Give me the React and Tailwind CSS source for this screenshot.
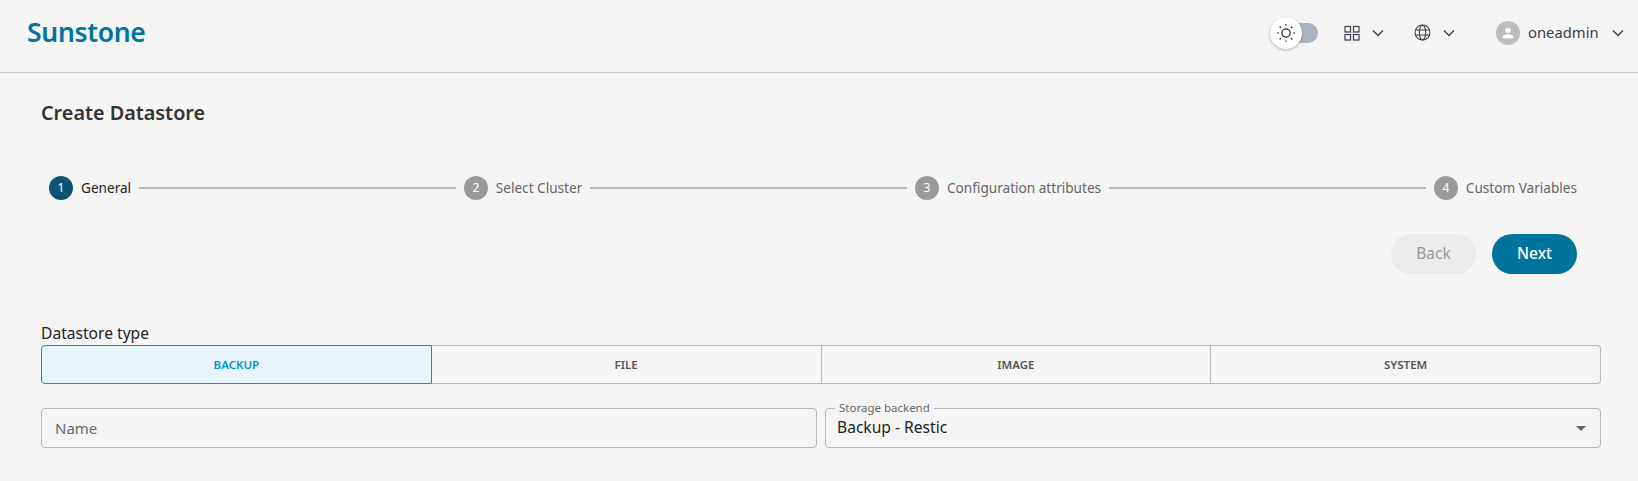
import React from 'react';

const Chevron = () => (
  <svg width="12" height="8" viewBox="0 0 12 8" fill="none" stroke="#3d3d4a" strokeWidth="1.3" className="shrink-0"><path d="M1 1.5l5 5 5-5" /></svg>
);

function Step({ n, label, active }) {
  return (
    <div className="flex items-center gap-2 shrink-0">
      <span className={`w-6 h-6 rounded-full flex items-center justify-center text-xs text-white ${active ? 'bg-[#0b5472]' : 'bg-[#9a9a9a]'}`}>{n}</span>
      <span className={`text-[13.6px] ${active ? 'text-[#222]' : 'text-[#666]'}`}>{label}</span>
    </div>
  );
}

export default function App() {
  return (
    <div className="w-[1638px] h-[481px] bg-[#f5f5f5] overflow-hidden [font-family:'Noto_Sans',sans-serif]">
      <header className="h-[73px] border-b border-[#c8c8c8] flex items-center pl-[27px] pr-[14px]">
        <span className="text-[26.5px] font-semibold text-[#00739e] -mt-[7px] tracking-[-0.3px]">Sunstone</span>
        <div className="ml-auto flex items-center text-[#3d3d4a] -mt-[7px]">
          <div className="relative w-[48px] h-[20px] rounded-full bg-[#aab4c0] mr-[26px]">
            <span className="absolute left-0 -top-[6px] w-[32px] h-[32px] rounded-full bg-white flex items-center justify-center shadow-[0_1px_3px_rgba(0,0,0,0.3)]">
              <svg width="18" height="18" viewBox="0 0 24 24" fill="none" stroke="#222" strokeWidth="1.7" strokeLinecap="round">
                <circle cx="12" cy="12" r="5.5" />
                <path d="M22.5 12h.5M12 1.5V1M12 23v-.5M20 20l-.8-.8M20 4l-.8.8M4 20l.8-.8M4 4l.8.8M1 12h.5" />
              </svg>
            </span>
          </div>
          <svg width="16" height="16" viewBox="0 0 16 16" fill="none" stroke="#3d3d4a" strokeWidth="1.2">
            <rect x="1" y="1.5" width="5.5" height="5.5" /><rect x="9.5" y="1.5" width="5.5" height="5.5" /><rect x="1" y="9.5" width="5.5" height="5.5" /><rect x="9.5" y="9.5" width="5.5" height="5.5" />
          </svg>
          <span className="ml-[12px]"><Chevron /></span>
          <svg className="ml-[30px]" width="17" height="17" viewBox="0 0 24 24" fill="none" stroke="#3d3d4a" strokeWidth="1.5">
            <circle cx="12" cy="12" r="10.5" />
            <ellipse cx="12" cy="12" rx="4.5" ry="10.5" />
            <path d="M2 8.5h20M2 15.5h20" />
          </svg>
          <span className="ml-[12px]"><Chevron /></span>
          <span className="ml-[41px] w-[24px] h-[24px] rounded-full bg-[#bdbdbd] flex items-center justify-center">
            <svg width="16" height="16" viewBox="0 0 24 24" fill="#fff"><path d="M12 12c2.21 0 4-1.79 4-4s-1.79-4-4-4-4 1.79-4 4 1.79 4 4 4zm0 2c-2.67 0-8 1.34-8 4v2h16v-2c0-2.66-5.33-4-8-4z" /></svg>
          </span>
          <span className="ml-[8px] w-[74px] text-[14.8px] text-[#3d3d4a]">oneadmin</span>
          <span className="ml-[10px]"><Chevron /></span>
        </div>
      </header>
      <main className="pl-[41px] pr-[37px]">
        <h1 className="mt-[26px] text-[19.8px] leading-[28px] font-semibold text-[#333]">Create Datastore</h1>
        <div className="mt-[49px] flex items-center gap-2 pl-[8px] pr-[24px] h-6">
          <Step n="1" label="General" active />
          <div className="flex-1 h-[2px] bg-[#b8b8b8]" />
          <Step n="2" label="Select Cluster" />
          <div className="flex-1 h-[2px] bg-[#b8b8b8]" />
          <Step n="3" label="Configuration attributes" />
          <div className="flex-1 h-[2px] bg-[#b8b8b8]" />
          <Step n="4" label="Custom Variables" />
        </div>
        <div className="mt-[34px] flex justify-end gap-4 pr-[24px]">
          <button className="w-[85px] h-[40px] rounded-full bg-[#ebebeb] text-[#999] text-[15.5px]">Back</button>
          <button className="w-[85px] h-[40px] rounded-full bg-[#00739e] text-white text-[15.5px] font-medium">Next</button>
        </div>
        <div className="mt-[49px] h-[22px] leading-[20px] text-[15.6px] text-[#222]">Datastore type</div>
        <div className="flex h-[39px] text-[11.5px] font-semibold text-[#555]">
          <div className="flex-1 flex items-center justify-center border border-[#0098c3] bg-[#e6f4f9] text-[#0098c3] rounded-l-[4px]">BACKUP</div>
          <div className="flex-1 flex items-center justify-center border-y border-r border-[#b8b8b8]">FILE</div>
          <div className="flex-1 flex items-center justify-center border-y border-r border-[#b8b8b8]">IMAGE</div>
          <div className="flex-1 flex items-center justify-center border-y border-r border-[#b8b8b8] rounded-r-[4px]">SYSTEM</div>
        </div>
        <div className="mt-[24px] grid grid-cols-2 gap-2">
          <div className="h-[40px] border border-[#b8b8b8] rounded-[4px] flex items-center px-[13px] text-[15px] text-[#666]">Name</div>
          <div className="relative h-[40px] border border-[#b8b8b8] rounded-[4px] flex items-center px-[11px] text-[15.6px] text-[#222]">
            <span className="absolute left-[9px] -top-[8px] px-[4px] bg-[#f5f5f5] text-[11.5px] leading-[14px] text-[#666]">Storage backend</span>
            <span className="mt-[-1px]">Backup - Restic</span>
            <svg className="absolute right-[7px] top-[7px]" width="24" height="24" viewBox="0 0 24 24" fill="#666"><path d="M7 10l5 5 5-5z" /></svg>
          </div>
        </div>
      </main>
    </div>
  );
}
